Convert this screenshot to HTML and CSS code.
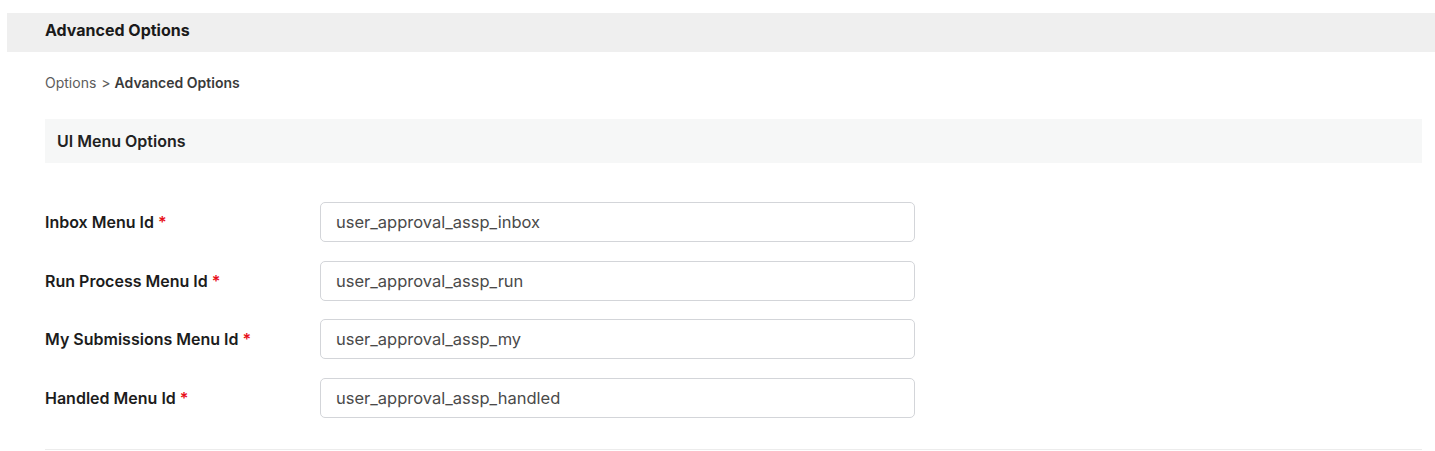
FILE: index.html
```html
<!DOCTYPE html>
<html>
<head>
<meta charset="utf-8">
<link rel="stylesheet" href="styles.css">
</head>
<body>
<div class="page">
  <div class="topbar"><h1 class="title">Advanced Options</h1></div>
  <div class="content">
    <nav class="crumbs"><span class="crumb">Options</span><span class="sep">&gt;</span><span class="crumb current">Advanced Options</span></nav>
    <div class="section-head">UI Menu Options</div>
    <div class="form">
      <div class="row"><label class="label">Inbox Menu Id <span class="req">*</span></label><div class="input">user_approval_assp_inbox</div></div>
      <div class="row"><label class="label">Run Process Menu Id <span class="req">*</span></label><div class="input">user_approval_assp_run</div></div>
      <div class="row"><label class="label">My Submissions Menu Id <span class="req">*</span></label><div class="input">user_approval_assp_my</div></div>
      <div class="row"><label class="label">Handled Menu Id <span class="req">*</span></label><div class="input">user_approval_assp_handled</div></div>
    </div>
    <div class="divider"></div>
  </div>
</div>
</body>
</html>
```

FILE: styles.css
```css
html, body { margin: 0; padding: 0; background: #fff; }
body { font-family: Inter, "Noto Sans", sans-serif; color: #1c1c1c; }
.page { padding: 13px 0 0 7px; }
.topbar { background: #efefef; height: 39px; display: flex; align-items: center; padding-left: 38px; padding-bottom: 5px; box-sizing: border-box; }
.title { margin: 0; font-size: 16px; font-weight: 700; color: #1a1a1a; line-height: 20px; }
.content { padding: 0 13px 0 38px; }
.crumbs { display: flex; align-items: center; height: 20px; margin-top: 20px; font-size: 14px; color: #5c5c5c; }
.sep { margin: 0 4px 0 5px; }
.crumb.current { font-weight: 600; color: #3a3a3a; }
.section-head { margin-top: 27px; height: 44px; background: #f6f7f7; display: flex; align-items: center; padding-left: 12px; font-size: 16px; font-weight: 600; color: #222; }
.form { margin-top: 39px; display: flex; flex-direction: column; gap: 18.7px; }
.row { display: flex; align-items: center; height: 40px; }
.label { width: 275px; font-size: 16px; font-weight: 600; color: #1c1c1c; }
.req { color: #e8101a; font-weight: 600; }
.input { box-sizing: border-box; width: 595px; height: 40px; border: 1px solid #d3d5d9; border-radius: 5px; display: flex; align-items: center; padding-left: 15px; font-size: 16.5px; color: #4a4a4a; }
.divider { margin-top: 31px; height: 1px; background: #ececec; }
```
